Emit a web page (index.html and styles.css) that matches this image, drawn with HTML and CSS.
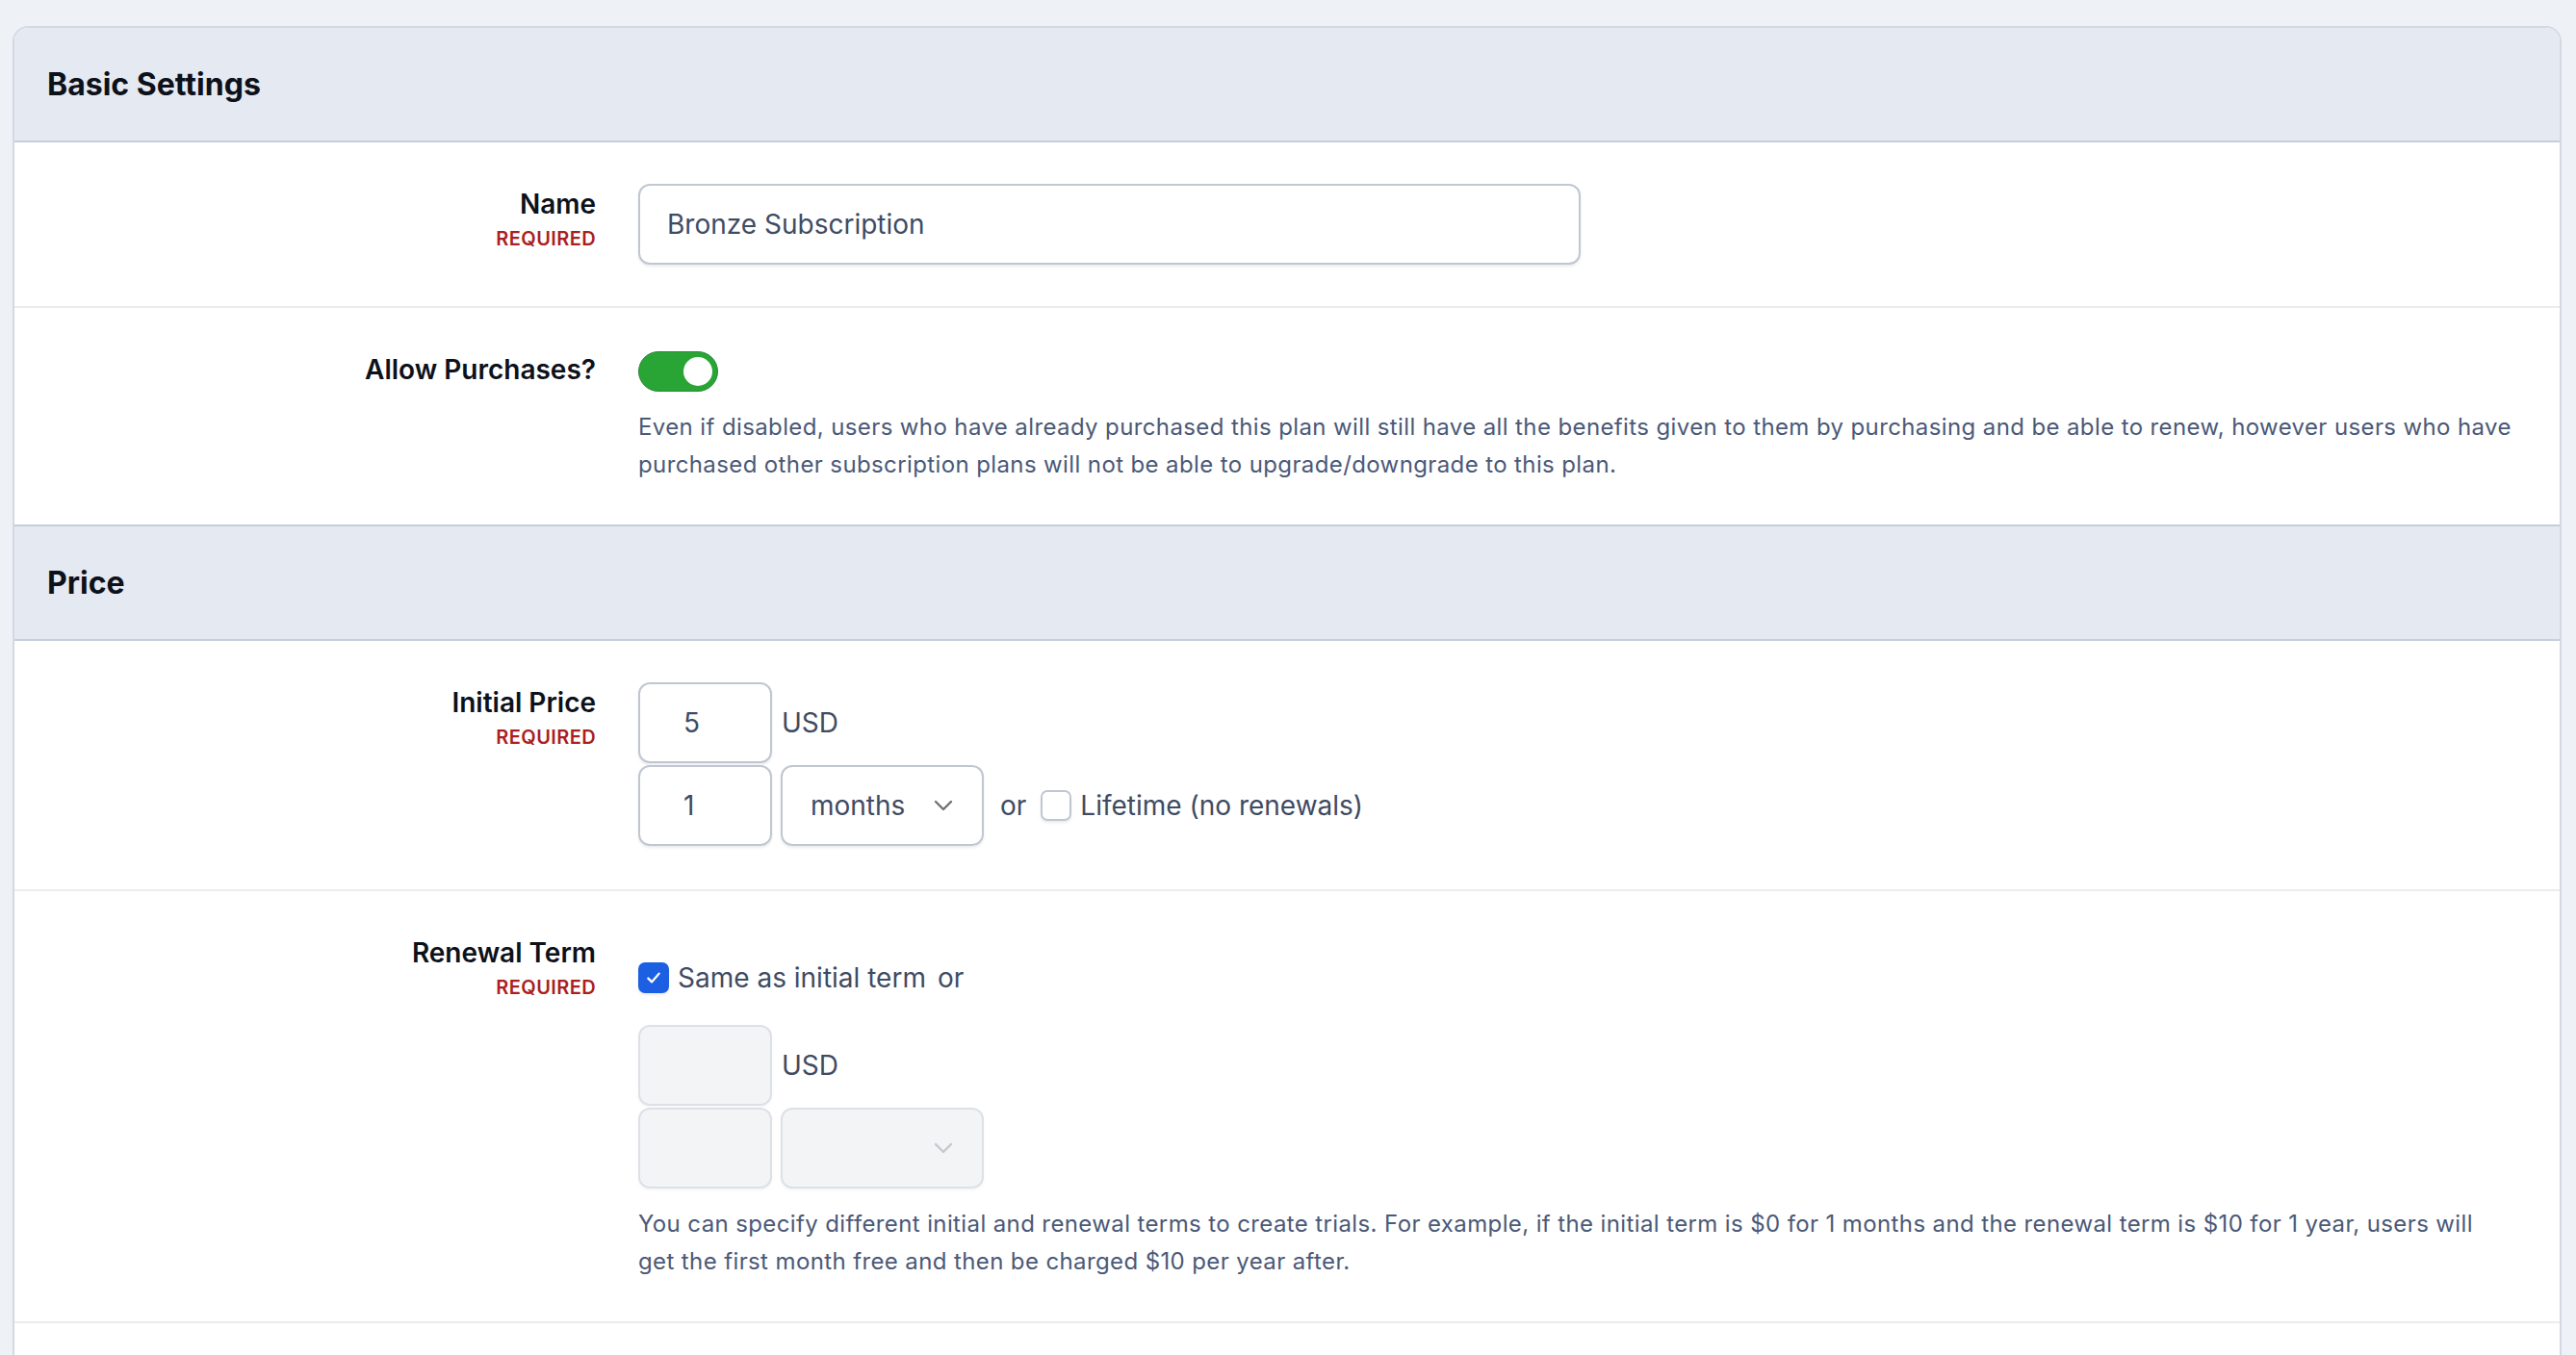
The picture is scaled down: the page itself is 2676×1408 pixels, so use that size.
FILE: index.html
```html
<!DOCTYPE html>
<html lang="en">
<head>
    <meta charset="UTF-8">
    <meta name="viewport" content="width=device-width, initial-scale=1.0">
    <title>Edit Subscription Plan</title>
    <link rel="stylesheet" href="styles.css">
</head>
<body>
    <div class="card">
        <section class="group">
            <h2 class="group-head">Basic Settings</h2>

            <div class="row">
                <div class="label">
                    <label for="name">Name</label>
                    <span class="required">Required</span>
                </div>
                <div class="field">
                    <input type="text" id="name" class="input input-wide" value="Bronze Subscription">
                </div>
            </div>

            <div class="row">
                <div class="label">
                    <label>Allow Purchases?</label>
                </div>
                <div class="field">
                    <div class="toggle on"><span class="knob"></span></div>
                    <p class="help">Even if disabled, users who have already purchased this plan will still have all the benefits given to them by purchasing and be able to renew, however users who have purchased other subscription plans will not be able to upgrade/downgrade to this plan.</p>
                </div>
            </div>
        </section>

        <section class="group">
            <h2 class="group-head">Price</h2>

            <div class="row">
                <div class="label">
                    <label for="price">Initial Price</label>
                    <span class="required">Required</span>
                </div>
                <div class="field">
                    <div class="inline">
                        <input type="text" id="price" class="input input-small" value="5">
                        <span class="unit">USD</span>
                    </div>
                    <div class="inline">
                        <input type="text" class="input input-small" value="1">
                        <div class="select">
                            <span>months</span>
                            <svg class="chevron" viewBox="0 0 20 12" width="20" height="12"><path d="M2 2 L10 10 L18 2" fill="none" stroke="currentColor" stroke-width="2.4" stroke-linecap="round" stroke-linejoin="round"/></svg>
                        </div>
                        <span class="or">or</span>
                        <span class="checkbox"></span>
                        <span class="check-label">Lifetime (no renewals)</span>
                    </div>
                </div>
            </div>

            <div class="row">
                <div class="label">
                    <label>Renewal Term</label>
                    <span class="required">Required</span>
                </div>
                <div class="field">
                    <div class="inline same-term">
                        <span class="checkbox checked">
                            <svg viewBox="0 0 16 16" width="20" height="20"><path d="M3.5 8.5 L6.5 11.5 L12.5 4.5" fill="none" stroke="#fff" stroke-width="1.8" stroke-linecap="round" stroke-linejoin="round"/></svg>
                        </span>
                        <span class="check-label">Same as initial term</span>
                        <span class="or-after">or</span>
                    </div>
                    <div class="inline">
                        <input type="text" class="input input-small" disabled>
                        <span class="unit">USD</span>
                    </div>
                    <div class="inline">
                        <input type="text" class="input input-small" disabled>
                        <div class="select disabled">
                            <span></span>
                            <svg class="chevron" viewBox="0 0 20 12" width="20" height="12"><path d="M2 2 L10 10 L18 2" fill="none" stroke="currentColor" stroke-width="2.4" stroke-linecap="round" stroke-linejoin="round"/></svg>
                        </div>
                    </div>
                    <p class="help">You can specify different initial and renewal terms to create trials. For example, if the initial term is $0 for 1 months and the renewal term is $10 for 1 year, users will get the first month free and then be charged $10 per year after.</p>
                </div>
            </div>
        </section>
    </div>
</body>
</html>
```

FILE: styles.css
```css
html, body {
    overflow: hidden;
}
body {
    font-family: Inter, "Noto Sans", sans-serif;
    margin: 0;
    padding: 27px 15px 0 13px;
    background-color: #eef1f6;
    color: #3f4b63;
}
.card {
    background: white;
    border: 2px solid #d3d9e2;
    border-radius: 16px;
    overflow: hidden;
    padding-bottom: 80px;
}
.group-head {
    margin: 0;
    height: 117px;
    display: flex;
    align-items: center;
    padding: 0 34px;
    background: #e5e9f1;
    border-bottom: 2px solid #c4cedc;
    font-size: 32px;
    font-weight: 700;
    color: #0d111a;
}
.group + .group .group-head {
    border-top: 2px solid #c4cedc;
}
.row {
    display: grid;
    grid-template-columns: 604px 1fr;
    column-gap: 44px;
    padding: 43px 47px 43px 0;
    border-bottom: 2px solid #ececee;
}
.group:first-child .row:last-child {
    border-bottom: none;
}
.label {
    text-align: right;
}
.label label {
    display: block;
    font-size: 28px;
    line-height: 42px;
    font-weight: 600;
    color: #0d111a;
}
.required {
    display: block;
    font-size: 20px;
    line-height: 30px;
    font-weight: 600;
    letter-spacing: 0.02em;
    text-transform: uppercase;
    color: #ac1f1f;
}
.input {
    box-sizing: border-box;
    height: 84px;
    border: 2px solid #c0c7d2;
    border-radius: 12px;
    box-shadow: 0 2px 3px rgba(0,0,0,0.08);
    font-family: inherit;
    font-size: 28px;
    color: #3f4b63;
    background: white;
    outline: none;
}
.input-wide {
    width: 979px;
    padding: 0 28px;
}
.input-small {
    width: 139px;
    padding: 0 0 0 45px;
}
.input:disabled {
    background: #f3f4f6;
    border-color: #dde1e7;
    box-shadow: 0 2px 3px rgba(0,0,0,0.04);
}
.inline {
    display: flex;
    align-items: center;
    margin-bottom: 2px;
    font-size: 28px;
}
.unit {
    margin-left: 10px;
}
.select {
    box-sizing: border-box;
    width: 211px;
    height: 84px;
    margin-left: 9px;
    display: flex;
    align-items: center;
    justify-content: space-between;
    padding: 0 30px 0 29px;
    border: 2px solid #c0c7d2;
    border-radius: 12px;
    box-shadow: 0 2px 3px rgba(0,0,0,0.08);
    color: #3f4b63;
}
.select .chevron {
    color: #707274;
}
.select.disabled {
    background: #f3f4f6;
    border-color: #dde1e7;
    box-shadow: 0 2px 3px rgba(0,0,0,0.04);
}
.select.disabled .chevron {
    color: #c6c8cc;
}
.or {
    margin: 0 15px 0 17px;
}
.checkbox {
    box-sizing: border-box;
    width: 32px;
    height: 32px;
    border: 2px solid #c0c7d2;
    border-radius: 7px;
    box-shadow: 0 2px 3px rgba(0,0,0,0.08);
    display: flex;
    align-items: center;
    justify-content: center;
}
.checkbox.checked {
    background: #1d5fe3;
    border-color: #1d5fe3;
}
.check-label {
    margin-left: 9px;
}
.same-term {
    line-height: 42px;
    margin: 26px 0 28px;
}
.or-after {
    margin-left: 12px;
}
.toggle {
    position: relative;
    box-sizing: border-box;
    width: 83px;
    height: 42px;
    margin-top: 2px;
    border-radius: 21px;
    background: #28a535;
    border: 1px solid #2c8a3a;
}
.knob {
    position: absolute;
    right: 5px;
    top: 5px;
    width: 30px;
    height: 30px;
    border-radius: 50%;
    background: white;
}
.help {
    margin: 17px 0 0;
    font-size: 24px;
    line-height: 39px;
    letter-spacing: 0.016em;
    color: #4b5977;
}
```
